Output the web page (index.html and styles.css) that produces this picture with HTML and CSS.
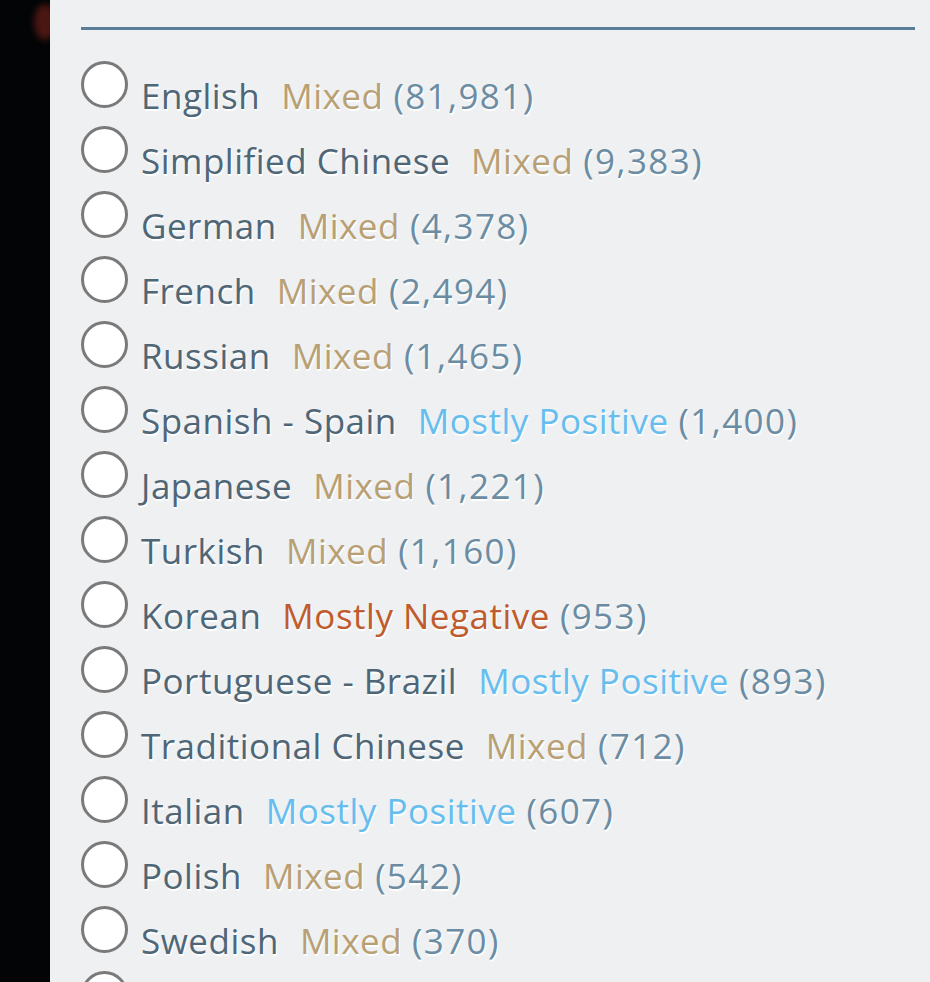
FILE: index.html
```html
<!DOCTYPE html>
<html>
<head>
<meta charset="utf-8">
<link rel="stylesheet" href="styles.css">
</head>
<body>
<div class="page">
  <aside class="side"><div class="blob"></div></aside>
  <main class="main">
    <div class="rule"></div>
    <ul class="langs">
      <li class="row"><span class="radio"></span><span class="label"><span class="name">English</span><span class="rating mixed">Mixed</span><span class="count">(81,981)</span></span></li>
      <li class="row"><span class="radio"></span><span class="label"><span class="name">Simplified Chinese</span><span class="rating mixed">Mixed</span><span class="count">(9,383)</span></span></li>
      <li class="row"><span class="radio"></span><span class="label"><span class="name">German</span><span class="rating mixed">Mixed</span><span class="count">(4,378)</span></span></li>
      <li class="row"><span class="radio"></span><span class="label"><span class="name">French</span><span class="rating mixed">Mixed</span><span class="count">(2,494)</span></span></li>
      <li class="row"><span class="radio"></span><span class="label"><span class="name">Russian</span><span class="rating mixed">Mixed</span><span class="count">(1,465)</span></span></li>
      <li class="row"><span class="radio"></span><span class="label"><span class="name">Spanish - Spain</span><span class="rating positive">Mostly Positive</span><span class="count">(1,400)</span></span></li>
      <li class="row"><span class="radio"></span><span class="label"><span class="name">Japanese</span><span class="rating mixed">Mixed</span><span class="count">(1,221)</span></span></li>
      <li class="row"><span class="radio"></span><span class="label"><span class="name">Turkish</span><span class="rating mixed">Mixed</span><span class="count">(1,160)</span></span></li>
      <li class="row"><span class="radio"></span><span class="label"><span class="name">Korean</span><span class="rating negative">Mostly Negative</span><span class="count">(953)</span></span></li>
      <li class="row"><span class="radio"></span><span class="label"><span class="name">Portuguese - Brazil</span><span class="rating positive">Mostly Positive</span><span class="count">(893)</span></span></li>
      <li class="row"><span class="radio"></span><span class="label"><span class="name">Traditional Chinese</span><span class="rating mixed">Mixed</span><span class="count">(712)</span></span></li>
      <li class="row"><span class="radio"></span><span class="label"><span class="name">Italian</span><span class="rating positive">Mostly Positive</span><span class="count">(607)</span></span></li>
      <li class="row"><span class="radio"></span><span class="label"><span class="name">Polish</span><span class="rating mixed">Mixed</span><span class="count">(542)</span></span></li>
      <li class="row"><span class="radio"></span><span class="label"><span class="name">Swedish</span><span class="rating mixed">Mixed</span><span class="count">(370)</span></span></li>
      <li class="row"><span class="radio"></span></li>
    </ul>
  </main>
</div>
</body>
</html>
```

FILE: styles.css
```css
html, body {
  margin: 0;
  padding: 0;
  height: 100%;
  overflow: hidden;
  background: #eef0f2;
}
.page {
  display: flex;
  height: 982px;
}
.side {
  width: 50px;
  flex: none;
  background: #020406;
  position: relative;
  overflow: hidden;
}
.blob {
  position: absolute;
  left: 34px;
  top: 4px;
  width: 22px;
  height: 36px;
  border-radius: 50%;
  background: #4a1612;
  filter: blur(3px);
}
.main {
  flex: 1;
  padding: 27px 15px 0 31px;
  font-family: "Open Sans", "Lato", sans-serif;
}
.rule {
  height: 3px;
  background: #5a7e98;
}
.langs {
  list-style: none;
  margin: 31px 0 0;
  padding: 0;
}
.row {
  display: flex;
  align-items: flex-start;
  height: 65px;
}
.radio {
  flex: none;
  width: 41px;
  height: 41px;
  border: 3px solid #7a7a7a;
  border-radius: 50%;
  background: #ffffff;
  margin-right: 13px;
}
.label {
  font-size: 35px;
  line-height: 65px;
  margin-top: 2px;
  white-space: nowrap;
  letter-spacing: 0.5px;
  text-shadow: 1px 2px 1px #ffffff;
}
.name {
  color: #4f6677;
  margin-right: 21px;
}
.rating { margin-right: 10px; }
.mixed { color: #b9a074; }
.positive { color: #66bdee; }
.negative { color: #c05b2d; }
.count {
  color: #6b8ca2;
  letter-spacing: 1.4px;
}
```
